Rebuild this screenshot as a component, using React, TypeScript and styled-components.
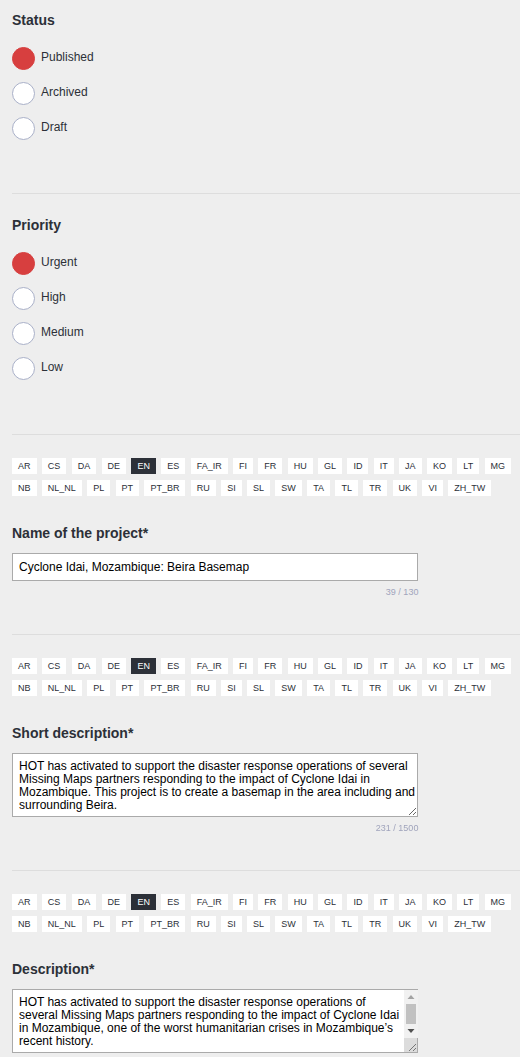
import React, { Fragment, useState } from 'react';
import styled, { createGlobalStyle } from 'styled-components';

const GlobalStyle = createGlobalStyle`
  * { box-sizing: border-box; }
  body {
    margin: 0;
    background: #eeeeee;
    color: #2c3038;
    font-family: "Liberation Sans", Arial, sans-serif;
    font-size: 12px;
  }
`;

const Form = styled.form`
  padding-left: 12px;
`;

const Section = styled.section<{ $top?: number; $bottom: number }>`
  padding-top: ${(p) => p.$top ?? 0}px;
  padding-bottom: ${(p) => p.$bottom}px;
  border-bottom: 1px solid #dddddd;
`;

const ChoiceGroup = styled.fieldset`
  margin: 0;
  padding: 0;
  border: 0;
`;

const Legend = styled.legend`
  float: left;
  width: 100%;
  padding: 0;
  margin-bottom: 17px;
  font-size: 14px;
  line-height: 18px;
  font-weight: 700;
`;

const Choice = styled.label`
  clear: both;
  display: flex;
  align-items: center;
  gap: 6px;
  height: 24px;
  margin-bottom: 11px;
  line-height: 16px;
`;

const ChoiceText = styled.span`
  padding-bottom: 2px;
`;

const Radio = styled.input`
  appearance: none;
  width: 23px;
  height: 23px;
  margin: 0;
  border: 1px solid #a9b0c8;
  border-radius: 50%;
  background: #ffffff;
  &:checked {
    border-color: #d73f3f;
    background: #d73f3f;
  }
`;

const Locales = styled.div`
  padding-top: 23px;
  line-height: 16px;
`;

const Locale = styled.button<{ $active: boolean }>`
  height: 16px;
  margin: 0 2px 6px 0;
  padding: 0 6px;
  border: 0;
  vertical-align: top;
  background: ${(p) => (p.$active ? '#2c3038' : '#ffffff')};
  color: ${(p) => (p.$active ? '#ffffff' : '#2c3038')};
  font-family: inherit;
  font-size: 9px;
  line-height: 16px;
`;

const FieldLabel = styled.label`
  display: block;
  margin: 22px 0 11px;
  font-size: 14px;
  line-height: 18px;
  font-weight: 700;
`;

const Field = styled.div`
  position: relative;
  width: 80%;
  max-width: 640px;
`;

const TextInput = styled.input`
  display: block;
  width: 100%;
  height: 28px;
  padding: 0 6px;
  border: 1px solid #aaaaaa;
  background: #ffffff;
  color: #000000;
  font-family: inherit;
  font-size: 12px;
`;

const TextArea = styled.textarea<{ $scrolls?: boolean }>`
  display: block;
  width: 100%;
  height: 64px;
  padding: 6px ${(p) => (p.$scrolls ? 14 : 0)}px 6px 6px;
  border: 1px solid #aaaaaa;
  background: #ffffff;
  color: #000000;
  font-family: inherit;
  font-size: 12px;
  line-height: 13px;
  resize: ${(p) => (p.$scrolls ? 'none' : 'both')};
  scrollbar-width: none;
`;

const ScrollBar = styled.div`
  position: absolute;
  top: 1px;
  right: 0;
  bottom: 0;
  width: 14px;
  display: flex;
  flex-direction: column;
  align-items: center;
  background: #f1f1f1;
`;

const Arrow = styled.svg`
  flex: none;
  width: 14px;
  height: 14px;
`;

const Thumb = styled.div`
  width: 10px;
  height: 20px;
  background: #c1c1c1;
`;

const Grip = styled.svg`
  flex: none;
  width: 14px;
  height: 15px;
  border: solid #aaaaaa;
  border-width: 0 1px 1px 0;
  background: #dcdcdc;
`;

const Counter = styled.div`
  padding-top: 6px;
  color: #a0a4bc;
  font-size: 9px;
  line-height: 10px;
  text-align: right;
`;

const LOCALES = [
  'AR', 'CS', 'DA', 'DE', 'EN', 'ES', 'FA_IR', 'FI', 'FR', 'HU', 'GL', 'ID', 'IT', 'JA', 'KO', 'LT', 'MG',
  'NB', 'NL_NL', 'PL', 'PT', 'PT_BR', 'RU', 'SI', 'SL', 'SW', 'TA', 'TL', 'TR', 'UK', 'VI', 'ZH_TW',
];

const SHORT_DESCRIPTION =
  'HOT has activated to support the disaster response operations of several Missing Maps partners responding to the impact of Cyclone Idai in Mozambique. This project is to create a basemap in the area including and surrounding Beira.';

const DESCRIPTION =
  'HOT has activated to support the disaster response operations of several Missing Maps partners responding to the impact of Cyclone Idai in Mozambique, one of the worst humanitarian crises in Mozambique’s recent history.';

interface ChoicesProps {
  title: string;
  name: string;
  options: string[];
  top: number;
  bottom: number;
}

function Choices({ title, name, options, top, bottom }: ChoicesProps) {
  return (
    <Section $top={top} $bottom={bottom}>
      <ChoiceGroup>
        <Legend>{title}</Legend>
        {options.map((option, i) => (
          <Choice key={option}>
            <Radio type="radio" name={name} defaultChecked={i === 0} />
            <ChoiceText>{option}</ChoiceText>
          </Choice>
        ))}
      </ChoiceGroup>
    </Section>
  );
}

function LocalePicker() {
  const [active, setActive] = useState('EN');
  return (
    <Locales>
      {LOCALES.map((code) => (
        <Fragment key={code}>
          <Locale type="button" $active={code === active} onClick={() => setActive(code)}>
            {code}
          </Locale>{' '}
        </Fragment>
      ))}
    </Locales>
  );
}

export default function App() {
  return (
    <>
      <GlobalStyle />
      <Form>
        <Choices title="Status" name="status" options={['Published', 'Archived', 'Draft']} top={11} bottom={42} />
        <Choices title="Priority" name="priority" options={['Urgent', 'High', 'Medium', 'Low']} top={22} bottom={43} />
        <Section $bottom={37}>
          <LocalePicker />
          <FieldLabel htmlFor="name">Name of the project*</FieldLabel>
          <Field>
            <TextInput id="name" defaultValue="Cyclone Idai, Mozambique: Beira Basemap" />
            <Counter>39 / 130</Counter>
          </Field>
        </Section>
        <Section $bottom={37}>
          <LocalePicker />
          <FieldLabel htmlFor="short">Short description*</FieldLabel>
          <Field>
            <TextArea id="short" defaultValue={SHORT_DESCRIPTION} />
            <Counter>231 / 1500</Counter>
          </Field>
        </Section>
        <section>
          <LocalePicker />
          <FieldLabel htmlFor="description">Description*</FieldLabel>
          <Field>
            <TextArea id="description" $scrolls defaultValue={DESCRIPTION} />
            <ScrollBar aria-hidden="true">
              <Arrow viewBox="0 0 14 14">
                <path d="M3.5 9 7 5l3.5 4z" fill="#a3a3a3" />
              </Arrow>
              <Thumb />
              <Arrow viewBox="0 0 14 14">
                <path d="M3.5 5 7 9l3.5-4z" fill="#505050" />
              </Arrow>
              <Grip viewBox="0 0 13 14">
                <path d="M5 13 12 6M9 13l3-3" stroke="#777777" fill="none" />
              </Grip>
            </ScrollBar>
          </Field>
        </section>
      </Form>
    </>
  );
}
